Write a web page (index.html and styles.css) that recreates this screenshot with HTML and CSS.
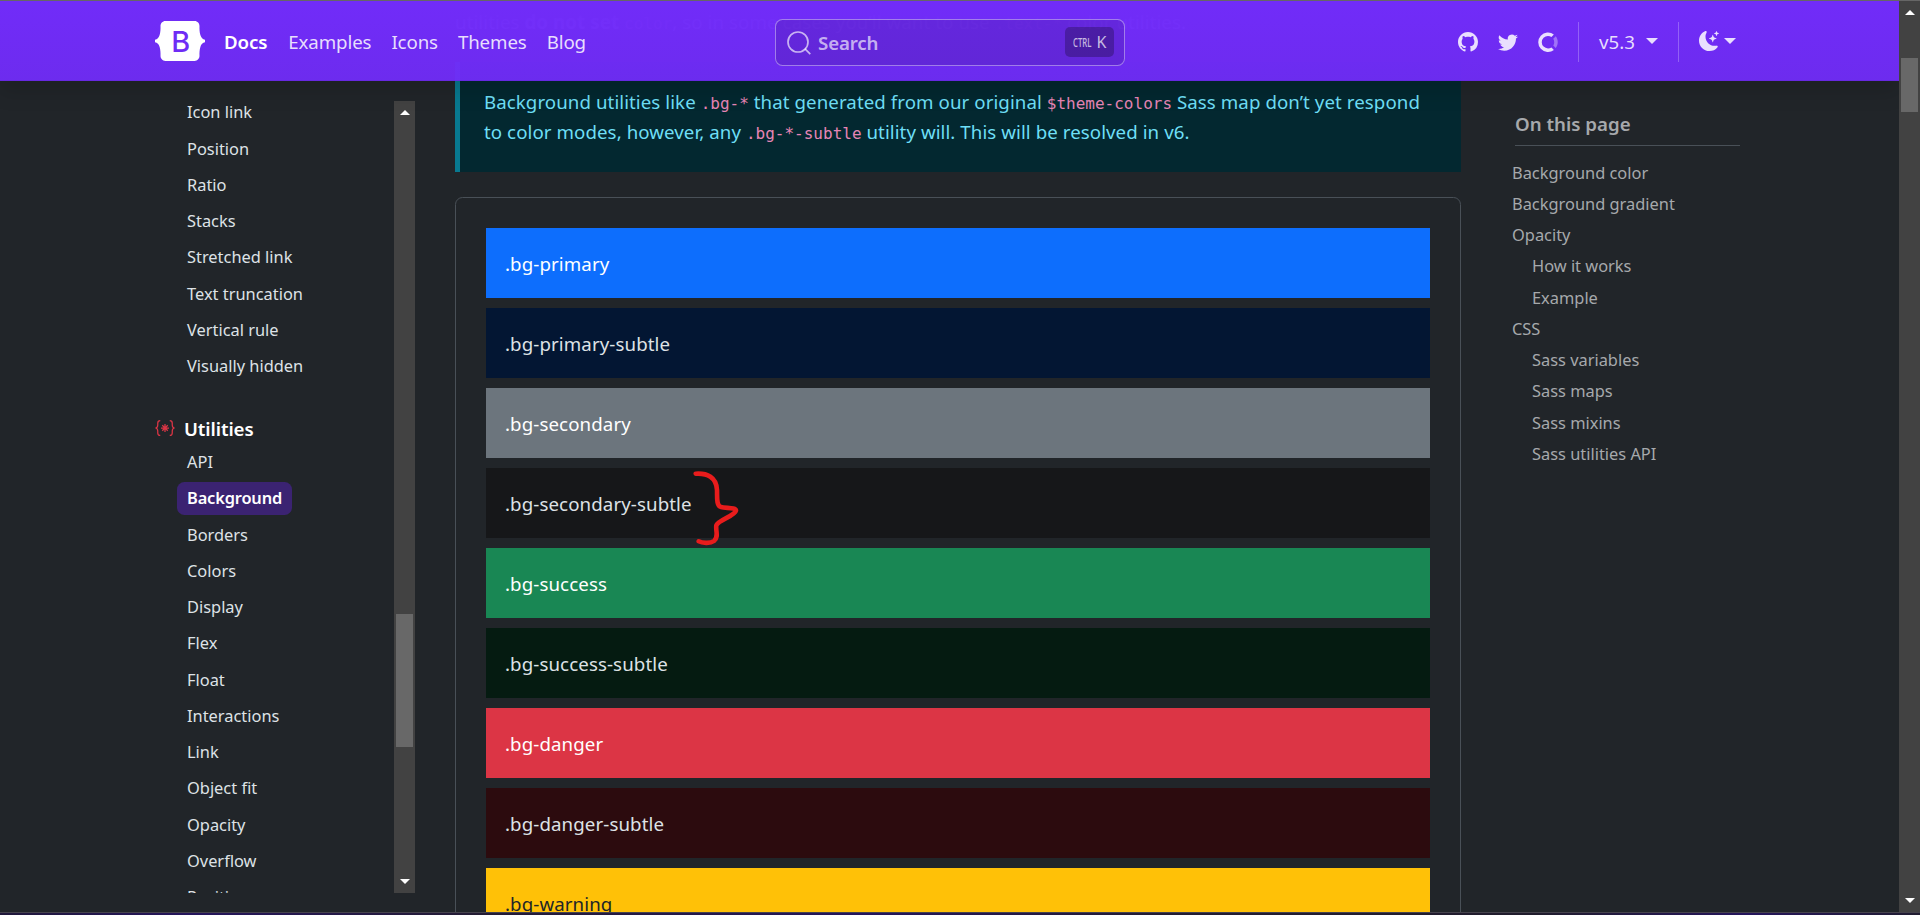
FILE: index.html
```html
<!DOCTYPE html>
<html lang="en">
<head>
<meta charset="utf-8">
<title>Background · Bootstrap v5.3</title>
<link rel="stylesheet" href="styles.css">
</head>
<body>
<div class="window">
  <div class="viewport">
    <header class="navbar">
      <a class="brand"><svg width="50" height="40" viewBox="0 0 118 94"><path fill="#fff" d="M24.509 0c-6.733 0-11.715 5.893-11.492 12.284.214 6.14-.064 14.092-2.066 20.577C8.943 39.365 5.547 43.485 0 44.014v5.972c5.547.529 8.943 4.649 10.951 11.153 2.002 6.485 2.28 14.437 2.066 20.577C12.794 88.106 17.776 94 24.51 94H93.5c6.733 0 11.714-5.893 11.491-12.284-.214-6.14.064-14.092 2.066-20.577 2.009-6.504 5.396-10.624 10.943-11.153v-5.972c-5.547-.529-8.934-4.649-10.943-11.153-2.002-6.484-2.28-14.437-2.066-20.577C105.214 5.894 100.233 0 93.5 0H24.508z"/><text class="brand-letter" x="60.5" y="72" text-anchor="middle">B</text></svg></a>
      <nav class="nav-links"><a class="active">Docs</a><a>Examples</a><a>Icons</a><a>Themes</a><a>Blog</a></nav>
      <div class="search">
        <svg width="26" height="26" viewBox="0 0 26 26" fill="none" stroke="currentColor" stroke-width="1.7"><circle cx="12" cy="12" r="10"/><path d="M18.8 18.7 24.3 24.2"/></svg>
        <span class="search-label">Search</span>
        <span class="keys"><span class="ctrl">CTRL</span><span class="key-k">K</span></span>
      </div>
      <div class="tools">
        <svg width="20" height="20" viewBox="0 0 16 16" fill="currentColor"><path d="M8 0C3.58 0 0 3.58 0 8c0 3.54 2.29 6.53 5.47 7.59.4.07.55-.17.55-.38 0-.19-.01-.82-.01-1.49-2.01.37-2.53-.49-2.69-.94-.09-.23-.48-.94-.82-1.13-.28-.15-.68-.52-.01-.53.63-.01 1.08.58 1.23.82.72 1.21 1.87.87 2.33.66.07-.52.28-.87.51-1.07-1.78-.2-3.64-.89-3.64-3.95 0-.87.31-1.59.82-2.15-.08-.2-.36-1.02.08-2.12 0 0 .67-.21 2.2.82.64-.18 1.32-.27 2-.27.68 0 1.36.09 2 .27 1.53-1.04 2.2-.82 2.2-.82.44 1.1.16 1.92.08 2.12.51.56.82 1.27.82 2.15 0 3.07-1.87 3.75-3.65 3.95.29.25.54.73.54 1.48 0 1.07-.01 1.93-.01 2.2 0 .21.15.46.55.38A8.012 8.012 0 0 0 16 8c0-4.42-3.58-8-8-8z"/></svg>
        <svg width="20" height="20" viewBox="0 0 16 16" fill="currentColor"><path d="M5.026 15c6.038 0 9.341-5.003 9.341-9.334 0-.14 0-.282-.006-.422A6.685 6.685 0 0 0 16 3.542a6.658 6.658 0 0 1-1.889.518 3.301 3.301 0 0 0 1.447-1.817 6.533 6.533 0 0 1-2.087.793A3.286 3.286 0 0 0 7.875 6.03a9.325 9.325 0 0 1-6.767-3.429 3.289 3.289 0 0 0 1.018 4.382A3.323 3.323 0 0 1 .64 6.575v.045a3.288 3.288 0 0 0 2.632 3.218 3.203 3.203 0 0 1-.865.115 3.23 3.23 0 0 1-.614-.057 3.283 3.283 0 0 0 3.067 2.277A6.588 6.588 0 0 1 .78 13.58a6.32 6.32 0 0 1-.78-.045A9.344 9.344 0 0 0 5.026 15z"/></svg>
        <svg width="20" height="20" viewBox="0 0 40 41" fill="currentColor"><path fill-opacity=".4" d="M32.8 21c0 2.4-.8 4.9-2 6.9l5.1 5.1c2.5-3.4 4.1-7.6 4.1-12 0-4.6-1.6-8.8-4-12.2L30.7 14c1.2 2 2 4.3 2 7z"/><path d="M20 33.7a12.8 12.8 0 0 1 0-25.6c2.6 0 5 .7 7 2.1L32 5a20 20 0 1 0 .1 31.9l-5-5.2a13 13 0 0 1-7 2z"/></svg>
        <i class="rule"></i>
        <span class="version">v5.3<i class="caret"></i></span>
        <i class="rule"></i>
        <span class="theme"><svg width="20" height="20" viewBox="0 0 16 16" fill="currentColor"><path d="M6 .278a.768.768 0 0 1 .08.858 7.208 7.208 0 0 0-.878 3.46c0 4.021 3.278 7.277 7.318 7.277.527 0 1.04-.055 1.533-.16a.787.787 0 0 1 .81.316.733.733 0 0 1-.031.893A8.349 8.349 0 0 1 8.344 16C3.734 16 0 12.286 0 7.71 0 4.266 2.114 1.312 5.124.06A.752.752 0 0 1 6 .278z"/><path d="M10.794 3.148a.217.217 0 0 1 .412 0l.387 1.162c.173.518.579.924 1.097 1.097l1.162.387a.217.217 0 0 1 0 .412l-1.162.387a1.734 1.734 0 0 0-1.097 1.097l-.387 1.162a.217.217 0 0 1-.412 0l-.387-1.162A1.734 1.734 0 0 0 9.31 6.593l-1.162-.387a.217.217 0 0 1 0-.412l1.162-.387a1.734 1.734 0 0 0 1.097-1.097l.387-1.162zM13.863.099a.145.145 0 0 1 .274 0l.258.774c.115.346.386.617.732.732l.774.258a.145.145 0 0 1 0 .274l-.774.258a1.156 1.156 0 0 0-.732.732l-.258.774a.145.145 0 0 1-.274 0l-.258-.774a1.156 1.156 0 0 0-.732-.732l-.774-.258a.145.145 0 0 1 0-.274l.774-.258c.346-.115.617-.386.732-.732L13.863.1z"/></svg><i class="caret"></i></span>
      </div>
    </header>

    <div class="layout">
      <aside class="sidebar">
        <div class="sidebar-list">
          <a>Icon link</a><a>Position</a><a>Ratio</a><a>Stacks</a><a>Stretched link</a><a>Text truncation</a><a>Vertical rule</a><a>Visually hidden</a>
          <div class="group"><svg width="20" height="20" viewBox="0 0 16 16" fill="none" stroke="currentColor"><path d="M4.200 2.100C2.600 2.100 2.200 2.800 2.200 4.100V5.600C2.200 7 1.700 7.800.400 8 1.700 8.200 2.200 9 2.200 10.400V11.900C2.200 13.200 2.600 13.900 4.200 13.900M11.800 2.100C13.400 2.100 13.800 2.800 13.800 4.100V5.600C13.800 7 14.300 7.800 15.600 8 14.300 8.200 13.800 9 13.800 10.400V11.900C13.800 13.200 13.400 13.900 11.800 13.900M8 4.800V11.200M4.800 8H11.200M5.800 5.800 10.200 10.200M10.200 5.800 5.800 10.200"/></svg>Utilities</div>
          <a>API</a><a class="current">Background</a><a>Borders</a><a>Colors</a><a>Display</a><a>Flex</a><a>Float</a><a>Interactions</a><a>Link</a><a>Object fit</a><a>Opacity</a><a>Overflow</a><a>Position</a>
        </div>
        <div class="scrollbar sidebar-scroll"><i class="up"></i><i class="thumb"></i><i class="down"></i></div>
      </aside>

      <main class="content">
        <p class="lead">utilities <strong>do not set</strong> <code>color</code>, so in some cases you’ll want to use <code>.text-*</code> color utilities.</p>
        <div class="callout">Background utilities like <code>.bg-*</code> that generated from our original <code>$theme-colors</code> Sass map don’t yet respond<br>to color modes, however, any <code>.bg-*-subtle</code> utility will. This will be resolved in v6.</div>
        <div class="example">
          <div class="bar primary">.bg-primary</div>
          <div class="bar primary-subtle">.bg-primary-subtle</div>
          <div class="bar secondary">.bg-secondary</div>
          <div class="bar secondary-subtle">.bg-secondary-subtle
            <svg class="mark" width="50" height="80" viewBox="0 0 50 80" fill="none"><path d="M5.700 13.700C17 13 26.500 17 27 30C27.300 36 26 46 31 47C36 48.300 46 47.500 46 50.500C45 56 28 60 26.300 65.500C25.500 71 29 77 24 81C20 84 12 83 8.700 81.300"/></svg>
          </div>
          <div class="bar success">.bg-success</div>
          <div class="bar success-subtle">.bg-success-subtle</div>
          <div class="bar danger">.bg-danger</div>
          <div class="bar danger-subtle">.bg-danger-subtle</div>
          <div class="bar warning">.bg-warning</div>
        </div>
      </main>

      <aside class="toc">
        <h2>On this page</h2>
        <a>Background color</a><a>Background gradient</a><a>Opacity</a><a class="sub">How it works</a><a class="sub">Example</a><a>CSS</a><a class="sub">Sass variables</a><a class="sub">Sass maps</a><a class="sub">Sass mixins</a><a class="sub">Sass utilities API</a>
      </aside>
    </div>
  </div>
  <div class="scrollbar page-scroll"><i class="up"></i><i class="thumb"></i><i class="down"></i></div>
</div>
<div class="bottom-edge"></div>
</body>
</html>
```
FILE: styles.css
```css
* { box-sizing: border-box; }
html, body { height: 100%; }
body {
  margin: 0;
  overflow: hidden;
  background: #212529;
  color: #dee2e6;
  font: 18.7px/30px "Noto Sans", "Open Sans", sans-serif;
}
svg { display: block; flex: none; overflow: visible; }
code { font-family: "DejaVu Sans Mono", monospace; font-size: 16px; line-height: 1; letter-spacing: 0; color: #e685b5; }

.window {
  display: flex;
  height: 912px;
  border-top: 1px solid #666;
}
.viewport { position: relative; flex: 1; min-width: 0; overflow: hidden; }
.bottom-edge {
  height: 3px;
  border-top: 1px solid #46434d;
  background: linear-gradient(90deg, #20183a, #25155c 10%, #241c33 25%, #25155c 45%, #241c33 60%, #201c2c 80%, #25155c 91%, #201c30);
}

/* Header */
.navbar {
  position: absolute;
  z-index: 2;
  inset: 0 0 auto 0;
  height: 80px;
  padding: 0 163px 0 155px;
  display: flex;
  align-items: center;
  background: linear-gradient(rgba(113, 44, 249, 1), rgba(113, 44, 249, .95));
  box-shadow: 0 10px 20px rgba(0, 0, 0, .15), inset 0 -1px 0 rgba(0, 0, 0, .05);
  color: rgba(255, 255, 255, .85);
}
.brand-letter { font: 500 68px "Inter", sans-serif; fill: #6f2cf5; }
.nav-links { display: flex; gap: 20px; margin-left: 19px; width: 551px; padding-top: 1px; letter-spacing: -.12px; }
.nav-links .active { color: #fff; font-weight: 600; margin-right: 1px; }
.search {
  width: 350px;
  height: 47px;
  margin-top: 3px;
  padding: 0 10px;
  display: flex;
  align-items: center;
  border: 1px solid rgba(255, 255, 255, .4);
  border-radius: 7.5px;
  background: rgba(0, 0, 0, .1);
  color: rgba(255, 255, 255, .65);
}
.search-label { margin-left: 6px; font-weight: 600; letter-spacing: -.15px; }
.keys {
  display: flex;
  align-items: center;
  justify-content: center;
  gap: 6px;
  width: 49px;
  height: 30px;
  margin: 0 0 2px auto;
  border-radius: 5px;
  background: rgba(0, 0, 0, .25);
  color: rgba(255, 255, 255, .7);
  font-size: 16px;
}
.ctrl { width: 18px; font-size: 13px; font-weight: 500; transform: scaleX(.6); transform-origin: left; }
.tools { display: flex; align-items: center; gap: 20px; margin-left: auto; padding-top: 1px; }
.rule { width: 1px; height: 40px; background: rgba(255, 255, 255, .25); }
.version, .theme { display: flex; align-items: center; }
.version .caret { margin-left: 11px; }
.caret { border: 6px solid transparent; border-top-color: currentColor; border-bottom: 0; }
.version .caret { margin-top: -2px; }
.theme { margin-left: 0; margin-top: -2px; }
.theme .caret { margin-left: 5px; }

/* Columns */
.layout { display: grid; grid-template-columns: 260px 1006px 224px; column-gap: 40px; height: 100%; padding-left: 155px; }

.sidebar { display: flex; height: 792px; margin-top: 100px; overflow: hidden; }
.sidebar-list {
  flex: 1;
  display: flex;
  flex-direction: column;
  align-items: flex-start;
  margin-top: -8px;
  font-size: 16.4px;
  line-height: 26.25px;
}
.sidebar-list a { flex: none; margin: 2.5px 0 0 22px; padding: 3.75px 10px; border-radius: 7.5px; }
.sidebar-list .current { background: #3b2372; color: #fff; font-weight: 600; letter-spacing: -.15px; }
.group {
  flex: none;
  display: flex;
  align-items: center;
  gap: 9px;
  height: 30px;
  margin: 31px 0 -1.25px;
  color: #fff;
  font-size: 18.7px;
  font-weight: 600;
  letter-spacing: -.1px;
}
.group svg { color: #dc3545; margin-top: -3px; }

/* Scrollbars */
.scrollbar { flex: none; width: 21px; display: flex; flex-direction: column; align-items: center; background: #424242; }
.up, .down { border: 5px solid transparent; }
.up { border-top: 0; border-bottom-color: #fff; margin-top: 9px; }
.down { border-bottom: 0; border-top-color: #fff; margin: auto 0 9px; }
.thumb { width: 17px; background: #686868; }
.sidebar-scroll .thumb { height: 133px; margin-top: 499px; }
.page-scroll .thumb { height: 54px; margin-top: 43px; }

/* Content */
.lead { height: 36px; margin: 0 0 25px; padding-top: 6px; white-space: nowrap; letter-spacing: .08px; }
.callout {
  height: 110px;
  padding: 25px 0 24px 24px;
  border-left: 5px solid #087990;
  background: #032830;
  color: #6edff6;
  white-space: nowrap;
  letter-spacing: .07px;
}
.example {
  display: flex;
  flex-direction: column;
  gap: 10px;
  height: 800px;
  margin-top: 25px;
  padding: 30px;
  border: 1px solid #495057;
  border-radius: 7.5px;
}
.bar { position: relative; flex: none; height: 70px; padding: 21px 19px 19px; color: #dee2e6; letter-spacing: .1px; }
.primary { background: #0d6efd; color: #fff; }
.primary-subtle { background: #031633; }
.secondary { background: #6c757d; color: #fff; }
.secondary-subtle { background: #161719; }
.success { background: #198754; color: #fff; }
.success-subtle { background: #051b11; }
.danger { background: #dc3545; color: #fff; }
.danger-subtle { background: #2c0b0e; }
.warning { background: #ffc107; color: #212529; }
/* hand-drawn brace next to the label */
.mark { position: absolute; left: 204px; top: -8px; stroke: #e81c1c; stroke-width: 4.6; stroke-linecap: round; stroke-linejoin: round; }

/* Table of contents */
.toc { padding-top: 107px; color: #a6a9ac; font-size: 16.4px; line-height: 26.25px; }
.toc h2 {
  margin: 0 0 11px 14px;
  padding: 0 0 5px;
  width: 225px;
  border-bottom: 1px solid #495057;
  font-size: 18.7px;
  line-height: 32px;
  font-weight: 600;
}
.toc a { display: block; margin-left: 11px; padding: 2.5px 0; white-space: nowrap; }
.toc .sub { margin-left: 31px; }
```
